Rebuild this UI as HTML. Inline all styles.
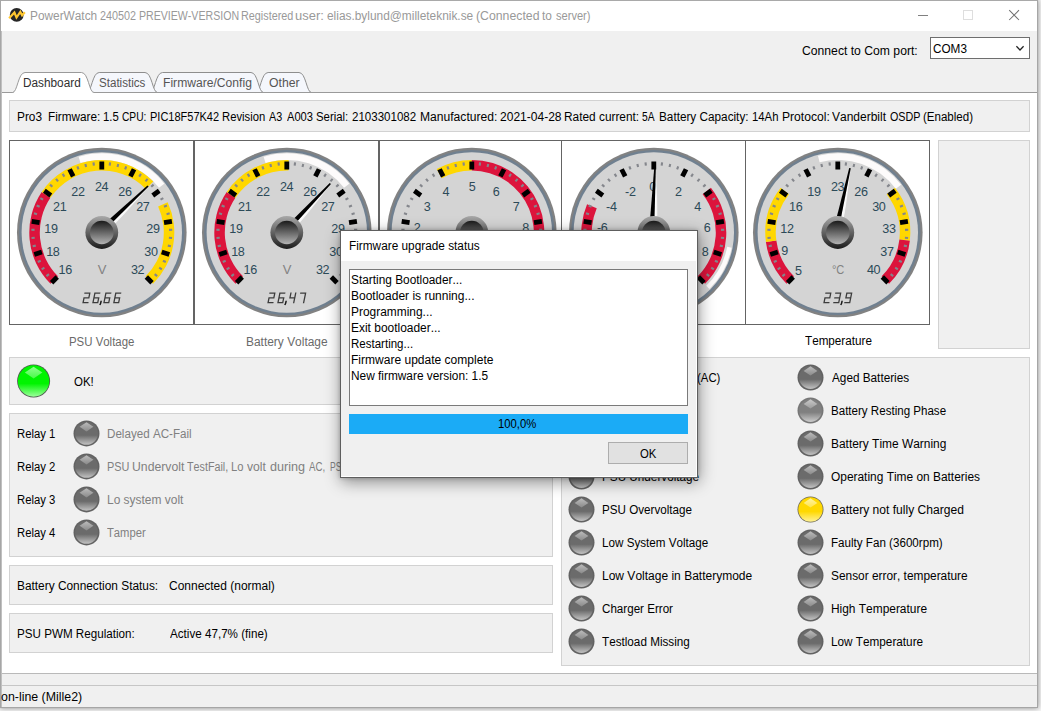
<!DOCTYPE html>
<html lang="en"><head><meta charset="utf-8"><title>PowerWatch</title>
<style>
html,body{margin:0;padding:0}
body{width:1041px;height:711px;overflow:hidden;background:#f4f4f4;position:relative;font-family:"Liberation Sans", sans-serif;font-size:12px}
.abs{position:absolute}
.t{position:absolute;white-space:pre;line-height:16px;height:16px;transform-origin:0 0;font-family:"Liberation Sans", sans-serif;font-kerning:none}
.panel{position:absolute;background:#f0f0f0;border:1px solid #d2d2d2;box-sizing:border-box}
.ln{position:absolute;background:#646464}
#win{position:absolute;left:0;top:0;width:1038px;height:708px;background:#f0f0f0;box-sizing:border-box;box-shadow:0 0 5px rgba(0,0,0,.45);overflow:hidden}
#dlg{position:absolute;left:340px;top:230px;width:358px;height:248px;box-sizing:border-box;border:1px solid #5e5e5e;background:#f0f0f0;box-shadow:1px 4px 15px rgba(0,0,0,.42),0 0 4px rgba(0,0,0,.22)}
</style></head><body>
<div id="win">
<div class="abs" style="left:0;top:0;width:1038px;height:31px;background:#fff"></div>
<div class="abs" style="left:2px;top:92px;width:1035px;height:582px;background:#fff;border-top:1px solid #b4b4b4;border-bottom:1px solid #b9b9b9;box-sizing:border-box"></div>
<div class="abs" style="left:2px;top:685px;width:1035px;height:1px;background:#c6c6c6"></div>
<div class="abs" style="left:0;top:0;width:1038px;height:1px;background:#a9a9a9"></div>
<div class="abs" style="left:0;top:0;width:1px;height:708px;background:#a6a6a6"></div>
<div class="abs" style="left:1px;top:31px;width:1px;height:677px;background:#c0c0c0"></div>
<div class="abs" style="left:1037px;top:0;width:1px;height:708px;background:#a6a6a6"></div>
<div class="abs" style="left:0;top:707px;width:1038px;height:1px;background:#a6a6a6"></div>
<svg class="abs" style="left:0;top:0" width="1041" height="100" viewBox="0 0 1041 100">
<circle cx="16.7" cy="14.9" r="6.9" fill="#262626"/>
<path d="M9.1 18.2L14.4 12.5L16.5 17.5L20.3 11.9L22.1 15.3L24.8 12.3" fill="none" stroke="#ffc730" stroke-width="2.2" stroke-linejoin="miter"/>
<path d="M918 15.5H928" stroke="#808080" stroke-width="1"/>
<rect x="963.5" y="10.5" width="9" height="9" fill="none" stroke="#dedede" stroke-width="1"/>
<path d="M1009.2 10.2L1019 20M1019 10.2L1009.2 20" stroke="#707070" stroke-width="1.05"/>
<!-- tabs -->
<path d="M255.60000000000002 92.5C260.6 92.5 261.1 72.5 268.1 72.5H299.0C306.0 72.5 306.5 92.5 311.5 92.5" fill="#f5f7fc" stroke="#8e8e8e" stroke-width="1"/>
<path d="M150 92.5C155 92.5 155.5 72.5 162.5 72.5H251.0C258.0 72.5 258.5 92.5 263.5 92.5" fill="#f5f7fc" stroke="#8e8e8e" stroke-width="1"/>
<path d="M86.7 92.5C91.7 92.5 92.2 72.5 99.2 72.5H145.0C152.0 72.5 152.5 92.5 157.5 92.5" fill="#f5f7fc" stroke="#8e8e8e" stroke-width="1"/>
<path d="M12.5 93C17.5 93 18.0 73 25.0 73H81.5C88.5 73 89 93 94 93V94H12.5Z" fill="#fff"/>
<path d="M2 92.5H12.5C17.5 92.5 18.0 72.5 25.0 72.5H81.5C88.5 72.5 89 92.5 94 92.5H1037" fill="none" stroke="#9a9a9a" stroke-width="1"/>
</svg>
<div class="abs" style="left:930px;top:37px;width:100px;height:22px;box-sizing:border-box;border:1px solid #6e6e6e;background:#fff"></div>
<svg class="abs" style="left:1012px;top:42px" width="14" height="12" viewBox="0 0 14 12"><path d="M4.4 4.3L8 8L11.6 4.3" fill="none" stroke="#222" stroke-width="1.25"/></svg>
<div class="panel" style="left:9px;top:100px;width:1021px;height:32px"></div>
<div class="abs" style="left:9px;top:140px;width:921px;height:185px;background:#fff"></div>
<div class="ln" style="left:9px;top:140px;width:921px;height:1px"></div>
<div class="ln" style="left:9px;top:324px;width:921px;height:1px"></div>
<div class="ln" style="left:9px;top:140px;width:1px;height:185px"></div>
<div class="ln" style="left:193px;top:140px;width:1px;height:185px"></div>
<div class="ln" style="left:194px;top:140px;width:1px;height:185px"></div>
<div class="ln" style="left:378px;top:140px;width:1px;height:185px"></div>
<div class="ln" style="left:379px;top:140px;width:1px;height:185px"></div>
<div class="ln" style="left:561px;top:140px;width:1px;height:185px"></div>
<div class="ln" style="left:745px;top:140px;width:1px;height:185px"></div>
<div class="ln" style="left:929px;top:140px;width:1px;height:185px"></div>
<div class="panel" style="left:938px;top:140px;width:92px;height:209px"></div>
<div class="panel" style="left:9px;top:357px;width:544px;height:48px"></div>
<div class="panel" style="left:9px;top:413px;width:544px;height:144px"></div>
<div class="panel" style="left:9px;top:565px;width:544px;height:40px"></div>
<div class="panel" style="left:9px;top:613px;width:544px;height:40px"></div>
<div class="panel" style="left:561px;top:357px;width:469px;height:309px"></div>
<svg class="abs" style="left:0;top:0" width="1041" height="711" viewBox="0 0 1041 711" font-family='"Liberation Sans", sans-serif'>
<defs>
<linearGradient id="kb1" x1="0" y1="0" x2="0" y2="1"><stop offset="0" stop-color="#a8a8a8"/><stop offset="1" stop-color="#1c1c1c"/></linearGradient>
<linearGradient id="kb2" x1="0" y1="0" x2="0" y2="1"><stop offset="0" stop-color="#1a1a1a"/><stop offset="1" stop-color="#b4b4b4"/></linearGradient>
<linearGradient id="ndl" x1="0" y1="0" x2="1" y2="0"><stop offset="0" stop-color="#ffffff"/><stop offset="0.55" stop-color="#f4f4f4"/><stop offset="1" stop-color="#a8a8a8"/></linearGradient>
</defs>
<g>
<circle cx="101.8" cy="232.5" r="84.8" fill="#828282"/>
<circle cx="101.8" cy="232.5" r="82.6" fill="#708090"/>
<circle cx="101.8" cy="232.5" r="80.2" fill="#d4d4d4"/>
<path d="M78.61 156.67A79.3 79.3 0 0 1 164.29 183.68L159.01 187.80A72.6 72.6 0 0 0 80.57 163.07Z" fill="#fdfbfb"/>
<path d="M50.53 283.77A72.5 72.5 0 0 1 41.69 191.96L50.40 197.83A62 62 0 0 0 57.96 276.34Z" fill="#dc143c"/>
<path d="M41.69 191.96A72.5 72.5 0 0 1 153.33 181.50L145.87 188.89A62 62 0 0 0 50.40 197.83Z" fill="#ffd700"/>
<path d="M167.67 202.20A72.5 72.5 0 0 1 153.07 283.77L145.64 276.34A62 62 0 0 0 158.13 206.59Z" fill="#ffd700"/>
<rect x="100.75" y="162.00" width="2.1" height="3.2" fill="#84868c" transform="rotate(-128.25 101.8 232.5)"/>
<rect x="100.75" y="162.00" width="2.1" height="3.2" fill="#84868c" transform="rotate(-121.50 101.8 232.5)"/>
<rect x="100.75" y="162.00" width="2.1" height="3.2" fill="#84868c" transform="rotate(-114.75 101.8 232.5)"/>
<rect x="100.75" y="162.00" width="2.1" height="3.2" fill="#84868c" transform="rotate(-101.25 101.8 232.5)"/>
<rect x="100.75" y="162.00" width="2.1" height="3.2" fill="#84868c" transform="rotate(-94.50 101.8 232.5)"/>
<rect x="100.75" y="162.00" width="2.1" height="3.2" fill="#84868c" transform="rotate(-87.75 101.8 232.5)"/>
<rect x="100.75" y="162.00" width="2.1" height="3.2" fill="#84868c" transform="rotate(-74.25 101.8 232.5)"/>
<rect x="100.75" y="162.00" width="2.1" height="3.2" fill="#84868c" transform="rotate(-67.50 101.8 232.5)"/>
<rect x="100.75" y="162.00" width="2.1" height="3.2" fill="#84868c" transform="rotate(-60.75 101.8 232.5)"/>
<rect x="100.75" y="162.00" width="2.1" height="3.2" fill="#84868c" transform="rotate(-47.25 101.8 232.5)"/>
<rect x="100.75" y="162.00" width="2.1" height="3.2" fill="#84868c" transform="rotate(-40.50 101.8 232.5)"/>
<rect x="100.75" y="162.00" width="2.1" height="3.2" fill="#84868c" transform="rotate(-33.75 101.8 232.5)"/>
<rect x="100.75" y="162.00" width="2.1" height="3.2" fill="#84868c" transform="rotate(-20.25 101.8 232.5)"/>
<rect x="100.75" y="162.00" width="2.1" height="3.2" fill="#84868c" transform="rotate(-13.50 101.8 232.5)"/>
<rect x="100.75" y="162.00" width="2.1" height="3.2" fill="#84868c" transform="rotate(-6.75 101.8 232.5)"/>
<rect x="100.75" y="162.00" width="2.1" height="3.2" fill="#84868c" transform="rotate(6.75 101.8 232.5)"/>
<rect x="100.75" y="162.00" width="2.1" height="3.2" fill="#84868c" transform="rotate(13.50 101.8 232.5)"/>
<rect x="100.75" y="162.00" width="2.1" height="3.2" fill="#84868c" transform="rotate(20.25 101.8 232.5)"/>
<rect x="100.75" y="162.00" width="2.1" height="3.2" fill="#84868c" transform="rotate(33.75 101.8 232.5)"/>
<rect x="100.75" y="162.00" width="2.1" height="3.2" fill="#84868c" transform="rotate(40.50 101.8 232.5)"/>
<rect x="100.75" y="162.00" width="2.1" height="3.2" fill="#84868c" transform="rotate(47.25 101.8 232.5)"/>
<rect x="100.75" y="162.00" width="2.1" height="3.2" fill="#84868c" transform="rotate(60.75 101.8 232.5)"/>
<rect x="100.75" y="162.00" width="2.1" height="3.2" fill="#84868c" transform="rotate(67.50 101.8 232.5)"/>
<rect x="100.75" y="162.00" width="2.1" height="3.2" fill="#84868c" transform="rotate(74.25 101.8 232.5)"/>
<rect x="100.75" y="162.00" width="2.1" height="3.2" fill="#84868c" transform="rotate(87.75 101.8 232.5)"/>
<rect x="100.75" y="162.00" width="2.1" height="3.2" fill="#84868c" transform="rotate(94.50 101.8 232.5)"/>
<rect x="100.75" y="162.00" width="2.1" height="3.2" fill="#84868c" transform="rotate(101.25 101.8 232.5)"/>
<rect x="100.75" y="162.00" width="2.1" height="3.2" fill="#84868c" transform="rotate(114.75 101.8 232.5)"/>
<rect x="100.75" y="162.00" width="2.1" height="3.2" fill="#84868c" transform="rotate(121.50 101.8 232.5)"/>
<rect x="100.75" y="162.00" width="2.1" height="3.2" fill="#84868c" transform="rotate(128.25 101.8 232.5)"/>
<rect x="99.40" y="161.50" width="4.8" height="8" fill="#000" transform="rotate(-135.00 101.8 232.5)"/>
<rect x="99.40" y="161.50" width="4.8" height="8" fill="#000" transform="rotate(-108.00 101.8 232.5)"/>
<rect x="99.40" y="161.50" width="4.8" height="8" fill="#000" transform="rotate(-81.00 101.8 232.5)"/>
<rect x="99.40" y="161.50" width="4.8" height="8" fill="#000" transform="rotate(-54.00 101.8 232.5)"/>
<rect x="99.40" y="161.50" width="4.8" height="8" fill="#000" transform="rotate(-27.00 101.8 232.5)"/>
<rect x="99.40" y="161.50" width="4.8" height="8" fill="#000" transform="rotate(0.00 101.8 232.5)"/>
<rect x="99.40" y="161.50" width="4.8" height="8" fill="#000" transform="rotate(27.00 101.8 232.5)"/>
<rect x="99.40" y="161.50" width="4.8" height="8" fill="#000" transform="rotate(54.00 101.8 232.5)"/>
<rect x="99.40" y="161.50" width="4.8" height="8" fill="#000" transform="rotate(81.00 101.8 232.5)"/>
<rect x="99.40" y="161.50" width="4.8" height="8" fill="#000" transform="rotate(108.00 101.8 232.5)"/>
<rect x="99.40" y="161.50" width="4.8" height="8" fill="#000" transform="rotate(135.00 101.8 232.5)"/>
<text x="65.2" y="274.2" text-anchor="middle" font-size="12.6" letter-spacing="-0.35" fill="#2c4a58" >16</text>
<text x="52.8" y="255.6" text-anchor="middle" font-size="12.6" letter-spacing="-0.35" fill="#2c4a58" >18</text>
<text x="50.9" y="233.1" text-anchor="middle" font-size="12.6" letter-spacing="-0.35" fill="#2c4a58" >19</text>
<text x="59.7" y="210.9" text-anchor="middle" font-size="12.6" letter-spacing="-0.35" fill="#2c4a58" >21</text>
<text x="78.0" y="195.8" text-anchor="middle" font-size="12.6" letter-spacing="-0.35" fill="#2c4a58" >22</text>
<text x="101.6" y="191.1" text-anchor="middle" font-size="12.6" letter-spacing="-0.35" fill="#2c4a58" >24</text>
<text x="124.9" y="195.8" text-anchor="middle" font-size="12.6" letter-spacing="-0.35" fill="#2c4a58" >26</text>
<text x="142.8" y="210.9" text-anchor="middle" font-size="12.6" letter-spacing="-0.35" fill="#2c4a58" >27</text>
<text x="152.9" y="233.1" text-anchor="middle" font-size="12.6" letter-spacing="-0.35" fill="#2c4a58" >29</text>
<text x="151.0" y="256.4" text-anchor="middle" font-size="12.6" letter-spacing="-0.35" fill="#2c4a58" >30</text>
<text x="137.6" y="274.2" text-anchor="middle" font-size="12.6" letter-spacing="-0.35" fill="#2c4a58" >32</text>
<text x="102.1" y="274.1" text-anchor="middle" font-size="13" fill="#828282">V</text>
<g transform="translate(83.05 302.65) skewX(-11.5)"><path d="M0.00 -9.50L4.80 -9.50M4.80 -9.50L4.80 -4.75M0.00 -4.75L4.80 -4.75M0.00 -4.75L0.00 0.00M0.00 0.00L4.80 0.00" stroke="#3c3c3c" stroke-width="1.3" fill="none" stroke-linecap="square"/><path d="M9.90 -9.50L14.70 -9.50M9.90 -9.50L9.90 -4.75M9.90 -4.75L14.70 -4.75M9.90 -4.75L9.90 0.00M9.90 0.00L14.70 0.00M14.70 -4.75L14.70 0.00" stroke="#3c3c3c" stroke-width="1.3" fill="none" stroke-linecap="square"/><path d="M17.75 -1.9L17.75 0.5L17.25 2.3" stroke="#161616" stroke-width="1.5" fill="none"/><path d="M20.90 -9.50L25.70 -9.50M20.90 -9.50L20.90 -4.75M20.90 -4.75L25.70 -4.75M20.90 -4.75L20.90 0.00M20.90 0.00L25.70 0.00M25.70 -4.75L25.70 0.00" stroke="#3c3c3c" stroke-width="1.3" fill="none" stroke-linecap="square"/><path d="M30.80 -9.50L35.60 -9.50M30.80 -9.50L30.80 -4.75M30.80 -4.75L35.60 -4.75M30.80 -4.75L30.80 0.00M30.80 0.00L35.60 0.00M35.60 -4.75L35.60 0.00" stroke="#3c3c3c" stroke-width="1.3" fill="none" stroke-linecap="square"/></g>
<g transform="rotate(44.90 101.8 232.5)">
<path d="M106.6 232.5L102.39999999999999 167.3L102.0 232.5Z" fill="url(#ndl)"/>
<path d="M97.0 232.5L100.89999999999999 166.9L102.5 166.9L102.1 232.5Z" fill="#000"/>
</g>
<circle cx="101.8" cy="232.5" r="16.4" fill="url(#kb1)"/>
<circle cx="101.8" cy="232.5" r="11.8" fill="url(#kb2)"/>
</g>
<g>
<circle cx="286.8" cy="232.5" r="84.8" fill="#828282"/>
<circle cx="286.8" cy="232.5" r="82.6" fill="#708090"/>
<circle cx="286.8" cy="232.5" r="80.2" fill="#d4d4d4"/>
<path d="M263.61 156.67A79.3 79.3 0 0 1 349.29 183.68L344.01 187.80A72.6 72.6 0 0 0 265.57 163.07Z" fill="#fdfbfb"/>
<path d="M235.53 283.77A72.5 72.5 0 0 1 226.69 191.96L235.40 197.83A62 62 0 0 0 242.96 276.34Z" fill="#dc143c"/>
<path d="M226.69 191.96A72.5 72.5 0 0 1 288.70 160.02L288.42 170.52A62 62 0 0 0 235.40 197.83Z" fill="#ffd700"/>
<rect x="285.75" y="162.00" width="2.1" height="3.2" fill="#84868c" transform="rotate(-128.25 286.8 232.5)"/>
<rect x="285.75" y="162.00" width="2.1" height="3.2" fill="#84868c" transform="rotate(-121.50 286.8 232.5)"/>
<rect x="285.75" y="162.00" width="2.1" height="3.2" fill="#84868c" transform="rotate(-114.75 286.8 232.5)"/>
<rect x="285.75" y="162.00" width="2.1" height="3.2" fill="#84868c" transform="rotate(-101.25 286.8 232.5)"/>
<rect x="285.75" y="162.00" width="2.1" height="3.2" fill="#84868c" transform="rotate(-94.50 286.8 232.5)"/>
<rect x="285.75" y="162.00" width="2.1" height="3.2" fill="#84868c" transform="rotate(-87.75 286.8 232.5)"/>
<rect x="285.75" y="162.00" width="2.1" height="3.2" fill="#84868c" transform="rotate(-74.25 286.8 232.5)"/>
<rect x="285.75" y="162.00" width="2.1" height="3.2" fill="#84868c" transform="rotate(-67.50 286.8 232.5)"/>
<rect x="285.75" y="162.00" width="2.1" height="3.2" fill="#84868c" transform="rotate(-60.75 286.8 232.5)"/>
<rect x="285.75" y="162.00" width="2.1" height="3.2" fill="#84868c" transform="rotate(-47.25 286.8 232.5)"/>
<rect x="285.75" y="162.00" width="2.1" height="3.2" fill="#84868c" transform="rotate(-40.50 286.8 232.5)"/>
<rect x="285.75" y="162.00" width="2.1" height="3.2" fill="#84868c" transform="rotate(-33.75 286.8 232.5)"/>
<rect x="285.75" y="162.00" width="2.1" height="3.2" fill="#84868c" transform="rotate(-20.25 286.8 232.5)"/>
<rect x="285.75" y="162.00" width="2.1" height="3.2" fill="#84868c" transform="rotate(-13.50 286.8 232.5)"/>
<rect x="285.75" y="162.00" width="2.1" height="3.2" fill="#84868c" transform="rotate(-6.75 286.8 232.5)"/>
<rect x="285.75" y="162.00" width="2.1" height="3.2" fill="#84868c" transform="rotate(6.75 286.8 232.5)"/>
<rect x="285.75" y="162.00" width="2.1" height="3.2" fill="#84868c" transform="rotate(13.50 286.8 232.5)"/>
<rect x="285.75" y="162.00" width="2.1" height="3.2" fill="#84868c" transform="rotate(20.25 286.8 232.5)"/>
<rect x="285.75" y="162.00" width="2.1" height="3.2" fill="#84868c" transform="rotate(33.75 286.8 232.5)"/>
<rect x="285.75" y="162.00" width="2.1" height="3.2" fill="#84868c" transform="rotate(40.50 286.8 232.5)"/>
<rect x="285.75" y="162.00" width="2.1" height="3.2" fill="#84868c" transform="rotate(47.25 286.8 232.5)"/>
<rect x="285.75" y="162.00" width="2.1" height="3.2" fill="#84868c" transform="rotate(60.75 286.8 232.5)"/>
<rect x="285.75" y="162.00" width="2.1" height="3.2" fill="#84868c" transform="rotate(67.50 286.8 232.5)"/>
<rect x="285.75" y="162.00" width="2.1" height="3.2" fill="#84868c" transform="rotate(74.25 286.8 232.5)"/>
<rect x="285.75" y="162.00" width="2.1" height="3.2" fill="#84868c" transform="rotate(87.75 286.8 232.5)"/>
<rect x="285.75" y="162.00" width="2.1" height="3.2" fill="#84868c" transform="rotate(94.50 286.8 232.5)"/>
<rect x="285.75" y="162.00" width="2.1" height="3.2" fill="#84868c" transform="rotate(101.25 286.8 232.5)"/>
<rect x="285.75" y="162.00" width="2.1" height="3.2" fill="#84868c" transform="rotate(114.75 286.8 232.5)"/>
<rect x="285.75" y="162.00" width="2.1" height="3.2" fill="#84868c" transform="rotate(121.50 286.8 232.5)"/>
<rect x="285.75" y="162.00" width="2.1" height="3.2" fill="#84868c" transform="rotate(128.25 286.8 232.5)"/>
<rect x="284.40" y="161.50" width="4.8" height="8" fill="#000" transform="rotate(-135.00 286.8 232.5)"/>
<rect x="284.40" y="161.50" width="4.8" height="8" fill="#000" transform="rotate(-108.00 286.8 232.5)"/>
<rect x="284.40" y="161.50" width="4.8" height="8" fill="#000" transform="rotate(-81.00 286.8 232.5)"/>
<rect x="284.40" y="161.50" width="4.8" height="8" fill="#000" transform="rotate(-54.00 286.8 232.5)"/>
<rect x="284.40" y="161.50" width="4.8" height="8" fill="#000" transform="rotate(-27.00 286.8 232.5)"/>
<rect x="284.40" y="161.50" width="4.8" height="8" fill="#000" transform="rotate(0.00 286.8 232.5)"/>
<rect x="284.40" y="161.50" width="4.8" height="8" fill="#000" transform="rotate(27.00 286.8 232.5)"/>
<rect x="284.40" y="161.50" width="4.8" height="8" fill="#000" transform="rotate(54.00 286.8 232.5)"/>
<rect x="284.40" y="161.50" width="4.8" height="8" fill="#000" transform="rotate(81.00 286.8 232.5)"/>
<rect x="284.40" y="161.50" width="4.8" height="8" fill="#000" transform="rotate(108.00 286.8 232.5)"/>
<rect x="284.40" y="161.50" width="4.8" height="8" fill="#000" transform="rotate(135.00 286.8 232.5)"/>
<text x="250.2" y="274.2" text-anchor="middle" font-size="12.6" letter-spacing="-0.35" fill="#2c4a58" >16</text>
<text x="237.8" y="255.6" text-anchor="middle" font-size="12.6" letter-spacing="-0.35" fill="#2c4a58" >18</text>
<text x="235.9" y="233.1" text-anchor="middle" font-size="12.6" letter-spacing="-0.35" fill="#2c4a58" >19</text>
<text x="244.7" y="210.9" text-anchor="middle" font-size="12.6" letter-spacing="-0.35" fill="#2c4a58" >21</text>
<text x="263.0" y="195.8" text-anchor="middle" font-size="12.6" letter-spacing="-0.35" fill="#2c4a58" >22</text>
<text x="286.6" y="191.1" text-anchor="middle" font-size="12.6" letter-spacing="-0.35" fill="#2c4a58" >24</text>
<text x="309.9" y="195.8" text-anchor="middle" font-size="12.6" letter-spacing="-0.35" fill="#2c4a58" >26</text>
<text x="327.8" y="210.9" text-anchor="middle" font-size="12.6" letter-spacing="-0.35" fill="#2c4a58" >27</text>
<text x="337.9" y="233.1" text-anchor="middle" font-size="12.6" letter-spacing="-0.35" fill="#2c4a58" >29</text>
<text x="336.0" y="256.4" text-anchor="middle" font-size="12.6" letter-spacing="-0.35" fill="#2c4a58" >30</text>
<text x="322.6" y="274.2" text-anchor="middle" font-size="12.6" letter-spacing="-0.35" fill="#2c4a58" >32</text>
<text x="287.1" y="274.1" text-anchor="middle" font-size="13" fill="#828282">V</text>
<g transform="translate(268.05 302.65) skewX(-11.5)"><path d="M0.00 -9.50L4.80 -9.50M4.80 -9.50L4.80 -4.75M0.00 -4.75L4.80 -4.75M0.00 -4.75L0.00 0.00M0.00 0.00L4.80 0.00" stroke="#3c3c3c" stroke-width="1.3" fill="none" stroke-linecap="square"/><path d="M9.90 -9.50L14.70 -9.50M9.90 -9.50L9.90 -4.75M9.90 -4.75L14.70 -4.75M9.90 -4.75L9.90 0.00M9.90 0.00L14.70 0.00M14.70 -4.75L14.70 0.00" stroke="#3c3c3c" stroke-width="1.3" fill="none" stroke-linecap="square"/><path d="M17.75 -1.9L17.75 0.5L17.25 2.3" stroke="#161616" stroke-width="1.5" fill="none"/><path d="M20.90 -9.50L20.90 -4.75M20.90 -4.75L25.70 -4.75M25.70 -9.50L25.70 -4.75M25.70 -4.75L25.70 0.00" stroke="#3c3c3c" stroke-width="1.3" fill="none" stroke-linecap="square"/><path d="M30.80 -9.50L35.60 -9.50M35.60 -9.50L35.60 -4.75M35.60 -4.75L35.60 0.00" stroke="#3c3c3c" stroke-width="1.3" fill="none" stroke-linecap="square"/></g>
<g transform="rotate(41.70 286.8 232.5)">
<path d="M291.6 232.5L287.40000000000003 167.3L287.0 232.5Z" fill="url(#ndl)"/>
<path d="M282.0 232.5L285.90000000000003 166.9L287.5 166.9L287.1 232.5Z" fill="#000"/>
</g>
<circle cx="286.8" cy="232.5" r="16.4" fill="url(#kb1)"/>
<circle cx="286.8" cy="232.5" r="11.8" fill="url(#kb2)"/>
</g>
<g>
<circle cx="471.8" cy="232.5" r="84.8" fill="#828282"/>
<circle cx="471.8" cy="232.5" r="82.6" fill="#708090"/>
<circle cx="471.8" cy="232.5" r="80.2" fill="#d4d4d4"/>
<path d="M436.65 169.09A72.5 72.5 0 0 1 471.80 160.00L471.80 170.50A62 62 0 0 0 441.74 178.27Z" fill="#ffd700"/>
<path d="M471.80 160.00A72.5 72.5 0 0 1 523.07 283.77L515.64 276.34A62 62 0 0 0 471.80 170.50Z" fill="#dc143c"/>
<rect x="470.75" y="162.00" width="2.1" height="3.2" fill="#84868c" transform="rotate(-128.25 471.8 232.5)"/>
<rect x="470.75" y="162.00" width="2.1" height="3.2" fill="#84868c" transform="rotate(-121.50 471.8 232.5)"/>
<rect x="470.75" y="162.00" width="2.1" height="3.2" fill="#84868c" transform="rotate(-114.75 471.8 232.5)"/>
<rect x="470.75" y="162.00" width="2.1" height="3.2" fill="#84868c" transform="rotate(-101.25 471.8 232.5)"/>
<rect x="470.75" y="162.00" width="2.1" height="3.2" fill="#84868c" transform="rotate(-94.50 471.8 232.5)"/>
<rect x="470.75" y="162.00" width="2.1" height="3.2" fill="#84868c" transform="rotate(-87.75 471.8 232.5)"/>
<rect x="470.75" y="162.00" width="2.1" height="3.2" fill="#84868c" transform="rotate(-74.25 471.8 232.5)"/>
<rect x="470.75" y="162.00" width="2.1" height="3.2" fill="#84868c" transform="rotate(-67.50 471.8 232.5)"/>
<rect x="470.75" y="162.00" width="2.1" height="3.2" fill="#84868c" transform="rotate(-60.75 471.8 232.5)"/>
<rect x="470.75" y="162.00" width="2.1" height="3.2" fill="#84868c" transform="rotate(-47.25 471.8 232.5)"/>
<rect x="470.75" y="162.00" width="2.1" height="3.2" fill="#84868c" transform="rotate(-40.50 471.8 232.5)"/>
<rect x="470.75" y="162.00" width="2.1" height="3.2" fill="#84868c" transform="rotate(-33.75 471.8 232.5)"/>
<rect x="470.75" y="162.00" width="2.1" height="3.2" fill="#84868c" transform="rotate(-20.25 471.8 232.5)"/>
<rect x="470.75" y="162.00" width="2.1" height="3.2" fill="#84868c" transform="rotate(-13.50 471.8 232.5)"/>
<rect x="470.75" y="162.00" width="2.1" height="3.2" fill="#84868c" transform="rotate(-6.75 471.8 232.5)"/>
<rect x="470.75" y="162.00" width="2.1" height="3.2" fill="#84868c" transform="rotate(6.75 471.8 232.5)"/>
<rect x="470.75" y="162.00" width="2.1" height="3.2" fill="#84868c" transform="rotate(13.50 471.8 232.5)"/>
<rect x="470.75" y="162.00" width="2.1" height="3.2" fill="#84868c" transform="rotate(20.25 471.8 232.5)"/>
<rect x="470.75" y="162.00" width="2.1" height="3.2" fill="#84868c" transform="rotate(33.75 471.8 232.5)"/>
<rect x="470.75" y="162.00" width="2.1" height="3.2" fill="#84868c" transform="rotate(40.50 471.8 232.5)"/>
<rect x="470.75" y="162.00" width="2.1" height="3.2" fill="#84868c" transform="rotate(47.25 471.8 232.5)"/>
<rect x="470.75" y="162.00" width="2.1" height="3.2" fill="#84868c" transform="rotate(60.75 471.8 232.5)"/>
<rect x="470.75" y="162.00" width="2.1" height="3.2" fill="#84868c" transform="rotate(67.50 471.8 232.5)"/>
<rect x="470.75" y="162.00" width="2.1" height="3.2" fill="#84868c" transform="rotate(74.25 471.8 232.5)"/>
<rect x="470.75" y="162.00" width="2.1" height="3.2" fill="#84868c" transform="rotate(87.75 471.8 232.5)"/>
<rect x="470.75" y="162.00" width="2.1" height="3.2" fill="#84868c" transform="rotate(94.50 471.8 232.5)"/>
<rect x="470.75" y="162.00" width="2.1" height="3.2" fill="#84868c" transform="rotate(101.25 471.8 232.5)"/>
<rect x="470.75" y="162.00" width="2.1" height="3.2" fill="#84868c" transform="rotate(114.75 471.8 232.5)"/>
<rect x="470.75" y="162.00" width="2.1" height="3.2" fill="#84868c" transform="rotate(121.50 471.8 232.5)"/>
<rect x="470.75" y="162.00" width="2.1" height="3.2" fill="#84868c" transform="rotate(128.25 471.8 232.5)"/>
<rect x="469.40" y="161.50" width="4.8" height="8" fill="#000" transform="rotate(-135.00 471.8 232.5)"/>
<rect x="469.40" y="161.50" width="4.8" height="8" fill="#000" transform="rotate(-108.00 471.8 232.5)"/>
<rect x="469.40" y="161.50" width="4.8" height="8" fill="#000" transform="rotate(-81.00 471.8 232.5)"/>
<rect x="469.40" y="161.50" width="4.8" height="8" fill="#000" transform="rotate(-54.00 471.8 232.5)"/>
<rect x="469.40" y="161.50" width="4.8" height="8" fill="#000" transform="rotate(-27.00 471.8 232.5)"/>
<rect x="469.40" y="161.50" width="4.8" height="8" fill="#000" transform="rotate(0.00 471.8 232.5)"/>
<rect x="469.40" y="161.50" width="4.8" height="8" fill="#000" transform="rotate(27.00 471.8 232.5)"/>
<rect x="469.40" y="161.50" width="4.8" height="8" fill="#000" transform="rotate(54.00 471.8 232.5)"/>
<rect x="469.40" y="161.50" width="4.8" height="8" fill="#000" transform="rotate(81.00 471.8 232.5)"/>
<rect x="469.40" y="161.50" width="4.8" height="8" fill="#000" transform="rotate(108.00 471.8 232.5)"/>
<rect x="469.40" y="161.50" width="4.8" height="8" fill="#000" transform="rotate(135.00 471.8 232.5)"/>
<text x="435.2" y="274.2" text-anchor="middle" font-size="12.6" letter-spacing="-0.35" fill="#2c4a58" >0</text>
<text x="422.8" y="255.6" text-anchor="middle" font-size="12.6" letter-spacing="-0.35" fill="#2c4a58" >1</text>
<text x="417.2" y="231.5" text-anchor="middle" font-size="12.6" letter-spacing="-0.35" fill="#2c4a58" >2</text>
<text x="427.1" y="210.5" text-anchor="middle" font-size="12.6" letter-spacing="-0.35" fill="#2c4a58" >3</text>
<text x="445.8" y="195.6" text-anchor="middle" font-size="12.6" letter-spacing="-0.35" fill="#2c4a58" >4</text>
<text x="472.0" y="190.9" text-anchor="middle" font-size="12.6" letter-spacing="-0.35" fill="#2c4a58" >5</text>
<text x="496.1" y="195.6" text-anchor="middle" font-size="12.6" letter-spacing="-0.35" fill="#2c4a58" >6</text>
<text x="516.1" y="210.5" text-anchor="middle" font-size="12.6" letter-spacing="-0.35" fill="#2c4a58" >7</text>
<text x="525.5" y="231.5" text-anchor="middle" font-size="12.6" letter-spacing="-0.35" fill="#2c4a58" >8</text>
<text x="521.0" y="256.4" text-anchor="middle" font-size="12.6" letter-spacing="-0.35" fill="#2c4a58" >9</text>
<text x="507.6" y="274.2" text-anchor="middle" font-size="12.6" letter-spacing="-0.35" fill="#2c4a58" >10</text>
<text x="472.1" y="274.1" text-anchor="middle" font-size="13" fill="#828282">A</text>
<g transform="translate(458.00 302.65) skewX(-11.5)"><path d="M0.00 -9.50L4.80 -9.50M4.80 -9.50L4.80 -4.75M4.80 -4.75L4.80 0.00M0.00 0.00L4.80 0.00M0.00 -4.75L0.00 0.00M0.00 -9.50L0.00 -4.75" stroke="#3c3c3c" stroke-width="1.3" fill="none" stroke-linecap="square"/><path d="M7.85 -1.9L7.85 0.5L7.35 2.3" stroke="#161616" stroke-width="1.5" fill="none"/><path d="M11.00 -9.50L15.80 -9.50M15.80 -9.50L15.80 -4.75M15.80 -4.75L15.80 0.00M11.00 0.00L15.80 0.00M11.00 -4.75L11.00 0.00M11.00 -9.50L11.00 -4.75" stroke="#3c3c3c" stroke-width="1.3" fill="none" stroke-linecap="square"/><path d="M20.90 -9.50L25.70 -9.50M25.70 -9.50L25.70 -4.75M25.70 -4.75L25.70 0.00M20.90 0.00L25.70 0.00M20.90 -4.75L20.90 0.00M20.90 -9.50L20.90 -4.75" stroke="#3c3c3c" stroke-width="1.3" fill="none" stroke-linecap="square"/></g>
<g transform="rotate(-135.00 471.8 232.5)">
<path d="M476.6 232.5L472.40000000000003 167.3L472.0 232.5Z" fill="url(#ndl)"/>
<path d="M467.0 232.5L470.90000000000003 166.9L472.5 166.9L472.1 232.5Z" fill="#000"/>
</g>
<circle cx="471.8" cy="232.5" r="16.4" fill="url(#kb1)"/>
<circle cx="471.8" cy="232.5" r="11.8" fill="url(#kb2)"/>
</g>
<g>
<circle cx="653.8" cy="232.5" r="84.8" fill="#828282"/>
<circle cx="653.8" cy="232.5" r="82.6" fill="#708090"/>
<circle cx="653.8" cy="232.5" r="80.2" fill="#d4d4d4"/>
<path d="M731.64 247.63A79.3 79.3 0 0 1 709.38 289.06L706.23 285.85A74.8 74.8 0 0 0 727.23 246.77Z" fill="#fdfbfb"/>
<path d="M602.53 283.77A72.5 72.5 0 0 1 587.06 204.17L596.73 208.27A62 62 0 0 0 609.96 276.34Z" fill="#dc143c"/>
<path d="M710.93 187.86A72.5 72.5 0 0 1 705.07 283.77L697.64 276.34A62 62 0 0 0 702.66 194.33Z" fill="#dc143c"/>
<rect x="652.75" y="162.00" width="2.1" height="3.2" fill="#84868c" transform="rotate(-128.25 653.8 232.5)"/>
<rect x="652.75" y="162.00" width="2.1" height="3.2" fill="#84868c" transform="rotate(-121.50 653.8 232.5)"/>
<rect x="652.75" y="162.00" width="2.1" height="3.2" fill="#84868c" transform="rotate(-114.75 653.8 232.5)"/>
<rect x="652.75" y="162.00" width="2.1" height="3.2" fill="#84868c" transform="rotate(-101.25 653.8 232.5)"/>
<rect x="652.75" y="162.00" width="2.1" height="3.2" fill="#84868c" transform="rotate(-94.50 653.8 232.5)"/>
<rect x="652.75" y="162.00" width="2.1" height="3.2" fill="#84868c" transform="rotate(-87.75 653.8 232.5)"/>
<rect x="652.75" y="162.00" width="2.1" height="3.2" fill="#84868c" transform="rotate(-74.25 653.8 232.5)"/>
<rect x="652.75" y="162.00" width="2.1" height="3.2" fill="#84868c" transform="rotate(-67.50 653.8 232.5)"/>
<rect x="652.75" y="162.00" width="2.1" height="3.2" fill="#84868c" transform="rotate(-60.75 653.8 232.5)"/>
<rect x="652.75" y="162.00" width="2.1" height="3.2" fill="#84868c" transform="rotate(-47.25 653.8 232.5)"/>
<rect x="652.75" y="162.00" width="2.1" height="3.2" fill="#84868c" transform="rotate(-40.50 653.8 232.5)"/>
<rect x="652.75" y="162.00" width="2.1" height="3.2" fill="#84868c" transform="rotate(-33.75 653.8 232.5)"/>
<rect x="652.75" y="162.00" width="2.1" height="3.2" fill="#84868c" transform="rotate(-20.25 653.8 232.5)"/>
<rect x="652.75" y="162.00" width="2.1" height="3.2" fill="#84868c" transform="rotate(-13.50 653.8 232.5)"/>
<rect x="652.75" y="162.00" width="2.1" height="3.2" fill="#84868c" transform="rotate(-6.75 653.8 232.5)"/>
<rect x="652.75" y="162.00" width="2.1" height="3.2" fill="#84868c" transform="rotate(6.75 653.8 232.5)"/>
<rect x="652.75" y="162.00" width="2.1" height="3.2" fill="#84868c" transform="rotate(13.50 653.8 232.5)"/>
<rect x="652.75" y="162.00" width="2.1" height="3.2" fill="#84868c" transform="rotate(20.25 653.8 232.5)"/>
<rect x="652.75" y="162.00" width="2.1" height="3.2" fill="#84868c" transform="rotate(33.75 653.8 232.5)"/>
<rect x="652.75" y="162.00" width="2.1" height="3.2" fill="#84868c" transform="rotate(40.50 653.8 232.5)"/>
<rect x="652.75" y="162.00" width="2.1" height="3.2" fill="#84868c" transform="rotate(47.25 653.8 232.5)"/>
<rect x="652.75" y="162.00" width="2.1" height="3.2" fill="#84868c" transform="rotate(60.75 653.8 232.5)"/>
<rect x="652.75" y="162.00" width="2.1" height="3.2" fill="#84868c" transform="rotate(67.50 653.8 232.5)"/>
<rect x="652.75" y="162.00" width="2.1" height="3.2" fill="#84868c" transform="rotate(74.25 653.8 232.5)"/>
<rect x="652.75" y="162.00" width="2.1" height="3.2" fill="#84868c" transform="rotate(87.75 653.8 232.5)"/>
<rect x="652.75" y="162.00" width="2.1" height="3.2" fill="#84868c" transform="rotate(94.50 653.8 232.5)"/>
<rect x="652.75" y="162.00" width="2.1" height="3.2" fill="#84868c" transform="rotate(101.25 653.8 232.5)"/>
<rect x="652.75" y="162.00" width="2.1" height="3.2" fill="#84868c" transform="rotate(114.75 653.8 232.5)"/>
<rect x="652.75" y="162.00" width="2.1" height="3.2" fill="#84868c" transform="rotate(121.50 653.8 232.5)"/>
<rect x="652.75" y="162.00" width="2.1" height="3.2" fill="#84868c" transform="rotate(128.25 653.8 232.5)"/>
<rect x="651.40" y="161.50" width="4.8" height="8" fill="#000" transform="rotate(-135.00 653.8 232.5)"/>
<rect x="651.40" y="161.50" width="4.8" height="8" fill="#000" transform="rotate(-108.00 653.8 232.5)"/>
<rect x="651.40" y="161.50" width="4.8" height="8" fill="#000" transform="rotate(-81.00 653.8 232.5)"/>
<rect x="651.40" y="161.50" width="4.8" height="8" fill="#000" transform="rotate(-54.00 653.8 232.5)"/>
<rect x="651.40" y="161.50" width="4.8" height="8" fill="#000" transform="rotate(-27.00 653.8 232.5)"/>
<rect x="651.40" y="161.50" width="4.8" height="8" fill="#000" transform="rotate(0.00 653.8 232.5)"/>
<rect x="651.40" y="161.50" width="4.8" height="8" fill="#000" transform="rotate(27.00 653.8 232.5)"/>
<rect x="651.40" y="161.50" width="4.8" height="8" fill="#000" transform="rotate(54.00 653.8 232.5)"/>
<rect x="651.40" y="161.50" width="4.8" height="8" fill="#000" transform="rotate(81.00 653.8 232.5)"/>
<rect x="651.40" y="161.50" width="4.8" height="8" fill="#000" transform="rotate(108.00 653.8 232.5)"/>
<rect x="651.40" y="161.50" width="4.8" height="8" fill="#000" transform="rotate(135.00 653.8 232.5)"/>
<text x="617.2" y="274.2" text-anchor="middle" font-size="12.6" letter-spacing="-0.35" fill="#2c4a58" >-10</text>
<text x="604.8" y="255.6" text-anchor="middle" font-size="12.6" letter-spacing="-0.35" fill="#2c4a58" >-8</text>
<text x="602.2" y="231.9" text-anchor="middle" font-size="12.6" letter-spacing="-0.35" fill="#2c4a58" >-6</text>
<text x="611.3" y="210.8" text-anchor="middle" font-size="12.6" letter-spacing="-0.35" fill="#2c4a58" >-4</text>
<text x="630.3" y="195.6" text-anchor="middle" font-size="12.6" letter-spacing="-0.35" fill="#2c4a58" >-2</text>
<text x="652.6" y="190.9" text-anchor="middle" font-size="12.6" letter-spacing="-0.35" fill="#2c4a58" >0</text>
<text x="678.4" y="195.6" text-anchor="middle" font-size="12.6" letter-spacing="-0.35" fill="#2c4a58" >2</text>
<text x="697.6" y="210.8" text-anchor="middle" font-size="12.6" letter-spacing="-0.35" fill="#2c4a58" >4</text>
<text x="707.2" y="232.2" text-anchor="middle" font-size="12.6" letter-spacing="-0.35" fill="#2c4a58" >6</text>
<text x="705.1" y="255.7" text-anchor="middle" font-size="12.6" letter-spacing="-0.35" fill="#2c4a58" >8</text>
<text x="689.6" y="274.2" text-anchor="middle" font-size="12.6" letter-spacing="-0.35" fill="#2c4a58" >10</text>
<text x="654.0999999999999" y="274.1" text-anchor="middle" font-size="13" fill="#828282">A</text>
<g transform="translate(640.00 302.65) skewX(-11.5)"><path d="M0.00 -9.50L4.80 -9.50M4.80 -9.50L4.80 -4.75M4.80 -4.75L4.80 0.00M0.00 0.00L4.80 0.00M0.00 -4.75L0.00 0.00M0.00 -9.50L0.00 -4.75" stroke="#3c3c3c" stroke-width="1.3" fill="none" stroke-linecap="square"/><path d="M7.85 -1.9L7.85 0.5L7.35 2.3" stroke="#161616" stroke-width="1.5" fill="none"/><path d="M11.00 -9.50L15.80 -9.50M15.80 -9.50L15.80 -4.75M15.80 -4.75L15.80 0.00M11.00 0.00L15.80 0.00M11.00 -4.75L11.00 0.00M11.00 -9.50L11.00 -4.75" stroke="#3c3c3c" stroke-width="1.3" fill="none" stroke-linecap="square"/><path d="M20.90 -9.50L25.70 -9.50M25.70 -9.50L25.70 -4.75M20.90 -9.50L20.90 -4.75M20.90 -4.75L25.70 -4.75M25.70 -4.75L25.70 0.00M20.90 0.00L25.70 0.00" stroke="#3c3c3c" stroke-width="1.3" fill="none" stroke-linecap="square"/></g>
<g transform="rotate(1.20 653.8 232.5)">
<path d="M658.5999999999999 232.5L654.4 167.3L654.0 232.5Z" fill="url(#ndl)"/>
<path d="M649.0 232.5L652.9 166.9L654.5 166.9L654.0999999999999 232.5Z" fill="#000"/>
</g>
<circle cx="653.8" cy="232.5" r="16.4" fill="url(#kb1)"/>
<circle cx="653.8" cy="232.5" r="11.8" fill="url(#kb2)"/>
</g>
<g>
<circle cx="837.8" cy="232.5" r="84.8" fill="#828282"/>
<circle cx="837.8" cy="232.5" r="82.6" fill="#708090"/>
<circle cx="837.8" cy="232.5" r="80.2" fill="#d4d4d4"/>
<path d="M817.94 155.73A79.3 79.3 0 0 1 901.13 184.78L895.78 188.81A72.6 72.6 0 0 0 819.62 162.21Z" fill="#fdfbfb"/>
<path d="M786.53 283.77A72.5 72.5 0 0 1 765.92 241.96L776.33 240.59A62 62 0 0 0 793.96 276.34Z" fill="#dc143c"/>
<path d="M765.92 241.96A72.5 72.5 0 0 1 780.67 187.86L788.94 194.33A62 62 0 0 0 776.33 240.59Z" fill="#ffd700"/>
<path d="M894.93 187.86A72.5 72.5 0 0 1 909.83 240.71L899.40 239.52A62 62 0 0 0 886.66 194.33Z" fill="#ffd700"/>
<path d="M909.83 240.71A72.5 72.5 0 0 1 889.07 283.77L881.64 276.34A62 62 0 0 0 899.40 239.52Z" fill="#dc143c"/>
<rect x="836.75" y="162.00" width="2.1" height="3.2" fill="#84868c" transform="rotate(-128.25 837.8 232.5)"/>
<rect x="836.75" y="162.00" width="2.1" height="3.2" fill="#84868c" transform="rotate(-121.50 837.8 232.5)"/>
<rect x="836.75" y="162.00" width="2.1" height="3.2" fill="#84868c" transform="rotate(-114.75 837.8 232.5)"/>
<rect x="836.75" y="162.00" width="2.1" height="3.2" fill="#84868c" transform="rotate(-101.25 837.8 232.5)"/>
<rect x="836.75" y="162.00" width="2.1" height="3.2" fill="#84868c" transform="rotate(-94.50 837.8 232.5)"/>
<rect x="836.75" y="162.00" width="2.1" height="3.2" fill="#84868c" transform="rotate(-87.75 837.8 232.5)"/>
<rect x="836.75" y="162.00" width="2.1" height="3.2" fill="#84868c" transform="rotate(-74.25 837.8 232.5)"/>
<rect x="836.75" y="162.00" width="2.1" height="3.2" fill="#84868c" transform="rotate(-67.50 837.8 232.5)"/>
<rect x="836.75" y="162.00" width="2.1" height="3.2" fill="#84868c" transform="rotate(-60.75 837.8 232.5)"/>
<rect x="836.75" y="162.00" width="2.1" height="3.2" fill="#84868c" transform="rotate(-47.25 837.8 232.5)"/>
<rect x="836.75" y="162.00" width="2.1" height="3.2" fill="#84868c" transform="rotate(-40.50 837.8 232.5)"/>
<rect x="836.75" y="162.00" width="2.1" height="3.2" fill="#84868c" transform="rotate(-33.75 837.8 232.5)"/>
<rect x="836.75" y="162.00" width="2.1" height="3.2" fill="#84868c" transform="rotate(-20.25 837.8 232.5)"/>
<rect x="836.75" y="162.00" width="2.1" height="3.2" fill="#84868c" transform="rotate(-13.50 837.8 232.5)"/>
<rect x="836.75" y="162.00" width="2.1" height="3.2" fill="#84868c" transform="rotate(-6.75 837.8 232.5)"/>
<rect x="836.75" y="162.00" width="2.1" height="3.2" fill="#84868c" transform="rotate(6.75 837.8 232.5)"/>
<rect x="836.75" y="162.00" width="2.1" height="3.2" fill="#84868c" transform="rotate(13.50 837.8 232.5)"/>
<rect x="836.75" y="162.00" width="2.1" height="3.2" fill="#84868c" transform="rotate(20.25 837.8 232.5)"/>
<rect x="836.75" y="162.00" width="2.1" height="3.2" fill="#84868c" transform="rotate(33.75 837.8 232.5)"/>
<rect x="836.75" y="162.00" width="2.1" height="3.2" fill="#84868c" transform="rotate(40.50 837.8 232.5)"/>
<rect x="836.75" y="162.00" width="2.1" height="3.2" fill="#84868c" transform="rotate(47.25 837.8 232.5)"/>
<rect x="836.75" y="162.00" width="2.1" height="3.2" fill="#84868c" transform="rotate(60.75 837.8 232.5)"/>
<rect x="836.75" y="162.00" width="2.1" height="3.2" fill="#84868c" transform="rotate(67.50 837.8 232.5)"/>
<rect x="836.75" y="162.00" width="2.1" height="3.2" fill="#84868c" transform="rotate(74.25 837.8 232.5)"/>
<rect x="836.75" y="162.00" width="2.1" height="3.2" fill="#84868c" transform="rotate(87.75 837.8 232.5)"/>
<rect x="836.75" y="162.00" width="2.1" height="3.2" fill="#84868c" transform="rotate(94.50 837.8 232.5)"/>
<rect x="836.75" y="162.00" width="2.1" height="3.2" fill="#84868c" transform="rotate(101.25 837.8 232.5)"/>
<rect x="836.75" y="162.00" width="2.1" height="3.2" fill="#84868c" transform="rotate(114.75 837.8 232.5)"/>
<rect x="836.75" y="162.00" width="2.1" height="3.2" fill="#84868c" transform="rotate(121.50 837.8 232.5)"/>
<rect x="836.75" y="162.00" width="2.1" height="3.2" fill="#84868c" transform="rotate(128.25 837.8 232.5)"/>
<rect x="835.40" y="161.50" width="4.8" height="8" fill="#000" transform="rotate(-135.00 837.8 232.5)"/>
<rect x="835.40" y="161.50" width="4.8" height="8" fill="#000" transform="rotate(-108.00 837.8 232.5)"/>
<rect x="835.40" y="161.50" width="4.8" height="8" fill="#000" transform="rotate(-81.00 837.8 232.5)"/>
<rect x="835.40" y="161.50" width="4.8" height="8" fill="#000" transform="rotate(-54.00 837.8 232.5)"/>
<rect x="835.40" y="161.50" width="4.8" height="8" fill="#000" transform="rotate(-27.00 837.8 232.5)"/>
<rect x="835.40" y="161.50" width="4.8" height="8" fill="#000" transform="rotate(0.00 837.8 232.5)"/>
<rect x="835.40" y="161.50" width="4.8" height="8" fill="#000" transform="rotate(27.00 837.8 232.5)"/>
<rect x="835.40" y="161.50" width="4.8" height="8" fill="#000" transform="rotate(54.00 837.8 232.5)"/>
<rect x="835.40" y="161.50" width="4.8" height="8" fill="#000" transform="rotate(81.00 837.8 232.5)"/>
<rect x="835.40" y="161.50" width="4.8" height="8" fill="#000" transform="rotate(108.00 837.8 232.5)"/>
<rect x="835.40" y="161.50" width="4.8" height="8" fill="#000" transform="rotate(135.00 837.8 232.5)"/>
<text x="798.4" y="274.5" text-anchor="middle" font-size="12.6" letter-spacing="-0.35" fill="#2c4a58" >5</text>
<text x="784.5" y="255.4" text-anchor="middle" font-size="12.6" letter-spacing="-0.35" fill="#2c4a58" >9</text>
<text x="786.9" y="233.1" text-anchor="middle" font-size="12.6" letter-spacing="-0.35" fill="#2c4a58" >12</text>
<text x="795.7" y="210.9" text-anchor="middle" font-size="12.6" letter-spacing="-0.35" fill="#2c4a58" >16</text>
<text x="814.0" y="195.8" text-anchor="middle" font-size="12.6" letter-spacing="-0.35" fill="#2c4a58" >19</text>
<text x="837.6" y="191.1" text-anchor="middle" font-size="12.6" letter-spacing="-0.35" fill="#2c4a58" >23</text>
<text x="860.9" y="195.8" text-anchor="middle" font-size="12.6" letter-spacing="-0.35" fill="#2c4a58" >26</text>
<text x="878.8" y="210.9" text-anchor="middle" font-size="12.6" letter-spacing="-0.35" fill="#2c4a58" >30</text>
<text x="888.9" y="233.1" text-anchor="middle" font-size="12.6" letter-spacing="-0.35" fill="#2c4a58" >33</text>
<text x="887.0" y="256.4" text-anchor="middle" font-size="12.6" letter-spacing="-0.35" fill="#2c4a58" >37</text>
<text x="873.6" y="274.2" text-anchor="middle" font-size="12.6" letter-spacing="-0.35" fill="#2c4a58" >40</text>
<text x="838.0999999999999" y="274.1" text-anchor="middle" font-size="13" fill="#828282" textLength="12.4" lengthAdjust="spacingAndGlyphs">°C</text>
<g transform="translate(824.00 302.65) skewX(-11.5)"><path d="M0.00 -9.50L4.80 -9.50M4.80 -9.50L4.80 -4.75M0.00 -4.75L4.80 -4.75M0.00 -4.75L0.00 0.00M0.00 0.00L4.80 0.00" stroke="#3c3c3c" stroke-width="1.3" fill="none" stroke-linecap="square"/><path d="M9.90 -9.50L14.70 -9.50M14.70 -9.50L14.70 -4.75M9.90 -4.75L14.70 -4.75M14.70 -4.75L14.70 0.00M9.90 0.00L14.70 0.00" stroke="#3c3c3c" stroke-width="1.3" fill="none" stroke-linecap="square"/><path d="M17.75 -1.9L17.75 0.5L17.25 2.3" stroke="#161616" stroke-width="1.5" fill="none"/><path d="M20.90 -9.50L25.70 -9.50M25.70 -9.50L25.70 -4.75M20.90 -9.50L20.90 -4.75M20.90 -4.75L25.70 -4.75M25.70 -4.75L25.70 0.00M20.90 0.00L25.70 0.00" stroke="#3c3c3c" stroke-width="1.3" fill="none" stroke-linecap="square"/></g>
<g transform="rotate(10.80 837.8 232.5)">
<path d="M842.5999999999999 232.5L838.4 167.3L838.0 232.5Z" fill="url(#ndl)"/>
<path d="M833.0 232.5L836.9 166.9L838.5 166.9L838.0999999999999 232.5Z" fill="#000"/>
</g>
<circle cx="837.8" cy="232.5" r="16.4" fill="url(#kb1)"/>
<circle cx="837.8" cy="232.5" r="11.8" fill="url(#kb2)"/>
</g>
</svg>
<svg class="abs" style="left:0;top:0" width="1041" height="711" viewBox="0 0 1041 711">
<defs><linearGradient id="lggrayb" x1="0" y1="0" x2="0" y2="1"><stop offset="0" stop-color="#6b6b6b"/><stop offset="0.58" stop-color="#6b6b6b"/><stop offset="0.97" stop-color="#bcbcbc"/><stop offset="1" stop-color="#bcbcbc"/></linearGradient><linearGradient id="lggrayd" x1="0" y1="0" x2="0" y2="1"><stop offset="0" stop-color="#bcbcbc"/><stop offset="1" stop-color="#8a8a8a"/></linearGradient><linearGradient id="lglgrayb" x1="0" y1="0" x2="0" y2="1"><stop offset="0" stop-color="#808080"/><stop offset="0.58" stop-color="#808080"/><stop offset="0.97" stop-color="#c6c6c6"/><stop offset="1" stop-color="#c6c6c6"/></linearGradient><linearGradient id="lglgrayd" x1="0" y1="0" x2="0" y2="1"><stop offset="0" stop-color="#cacaca"/><stop offset="1" stop-color="#9c9c9c"/></linearGradient><linearGradient id="lgyellowb" x1="0" y1="0" x2="0" y2="1"><stop offset="0" stop-color="#ffd800"/><stop offset="0.58" stop-color="#ffd800"/><stop offset="0.97" stop-color="#fff08a"/><stop offset="1" stop-color="#fff08a"/></linearGradient><linearGradient id="lgyellowd" x1="0" y1="0" x2="0" y2="1"><stop offset="0" stop-color="#fff3a0"/><stop offset="1" stop-color="#ffe44a"/></linearGradient><linearGradient id="lggreenb" x1="0" y1="0" x2="0" y2="1"><stop offset="0" stop-color="#00f400"/><stop offset="0.58" stop-color="#00f400"/><stop offset="0.97" stop-color="#90ff90"/><stop offset="1" stop-color="#90ff90"/></linearGradient><linearGradient id="lggreend" x1="0" y1="0" x2="0" y2="1"><stop offset="0" stop-color="#8cff8c"/><stop offset="1" stop-color="#48fa48"/></linearGradient></defs>
<circle cx="33.6" cy="381" r="16.5" fill="#4f5a4f"/><circle cx="33.6" cy="381" r="15.70" fill="url(#lggreenb)"/><path d="M24.84 372.62L33.60 366.78L42.36 372.62L33.60 378.59Z" fill="url(#lggreend)"/>
<circle cx="86.5" cy="433.4" r="13" fill="#626262"/><circle cx="86.5" cy="433.4" r="11.40" fill="url(#lggrayb)"/><path d="M79.60 426.80L86.50 422.20L93.40 426.80L86.50 431.50Z" fill="url(#lggrayd)"/>
<circle cx="86.5" cy="466.4" r="13" fill="#626262"/><circle cx="86.5" cy="466.4" r="11.40" fill="url(#lggrayb)"/><path d="M79.60 459.80L86.50 455.20L93.40 459.80L86.50 464.50Z" fill="url(#lggrayd)"/>
<circle cx="86.5" cy="499.4" r="13" fill="#626262"/><circle cx="86.5" cy="499.4" r="11.40" fill="url(#lggrayb)"/><path d="M79.60 492.80L86.50 488.20L93.40 492.80L86.50 497.50Z" fill="url(#lggrayd)"/>
<circle cx="86.5" cy="532.4" r="13" fill="#626262"/><circle cx="86.5" cy="532.4" r="11.40" fill="url(#lggrayb)"/><path d="M79.60 525.80L86.50 521.20L93.40 525.80L86.50 530.50Z" fill="url(#lggrayd)"/>
<circle cx="581.5" cy="377.5" r="13" fill="#626262"/><circle cx="581.5" cy="377.5" r="11.40" fill="url(#lggrayb)"/><path d="M574.60 370.90L581.50 366.30L588.40 370.90L581.50 375.60Z" fill="url(#lggrayd)"/>
<circle cx="810.5" cy="377.5" r="13" fill="#626262"/><circle cx="810.5" cy="377.5" r="11.40" fill="url(#lggrayb)"/><path d="M803.60 370.90L810.50 366.30L817.40 370.90L810.50 375.60Z" fill="url(#lggrayd)"/>
<circle cx="581.5" cy="410.5" r="13" fill="#626262"/><circle cx="581.5" cy="410.5" r="11.40" fill="url(#lggrayb)"/><path d="M574.60 403.90L581.50 399.30L588.40 403.90L581.50 408.60Z" fill="url(#lggrayd)"/>
<circle cx="810.5" cy="410.5" r="13" fill="#777777"/><circle cx="810.5" cy="410.5" r="11.40" fill="url(#lglgrayb)"/><path d="M803.60 403.90L810.50 399.30L817.40 403.90L810.50 408.60Z" fill="url(#lglgrayd)"/>
<circle cx="581.5" cy="443.5" r="13" fill="#626262"/><circle cx="581.5" cy="443.5" r="11.40" fill="url(#lggrayb)"/><path d="M574.60 436.90L581.50 432.30L588.40 436.90L581.50 441.60Z" fill="url(#lggrayd)"/>
<circle cx="810.5" cy="443.5" r="13" fill="#626262"/><circle cx="810.5" cy="443.5" r="11.40" fill="url(#lggrayb)"/><path d="M803.60 436.90L810.50 432.30L817.40 436.90L810.50 441.60Z" fill="url(#lggrayd)"/>
<circle cx="581.5" cy="476.5" r="13" fill="#626262"/><circle cx="581.5" cy="476.5" r="11.40" fill="url(#lggrayb)"/><path d="M574.60 469.90L581.50 465.30L588.40 469.90L581.50 474.60Z" fill="url(#lggrayd)"/>
<circle cx="810.5" cy="476.5" r="13" fill="#626262"/><circle cx="810.5" cy="476.5" r="11.40" fill="url(#lggrayb)"/><path d="M803.60 469.90L810.50 465.30L817.40 469.90L810.50 474.60Z" fill="url(#lggrayd)"/>
<circle cx="581.5" cy="509.5" r="13" fill="#626262"/><circle cx="581.5" cy="509.5" r="11.40" fill="url(#lggrayb)"/><path d="M574.60 502.90L581.50 498.30L588.40 502.90L581.50 507.60Z" fill="url(#lggrayd)"/>
<circle cx="810.5" cy="509.5" r="13" fill="#6e6a5a"/><circle cx="810.5" cy="509.5" r="12.20" fill="url(#lgyellowb)"/><path d="M803.60 502.90L810.50 498.30L817.40 502.90L810.50 507.60Z" fill="url(#lgyellowd)"/>
<circle cx="581.5" cy="542.5" r="13" fill="#626262"/><circle cx="581.5" cy="542.5" r="11.40" fill="url(#lggrayb)"/><path d="M574.60 535.90L581.50 531.30L588.40 535.90L581.50 540.60Z" fill="url(#lggrayd)"/>
<circle cx="810.5" cy="542.5" r="13" fill="#626262"/><circle cx="810.5" cy="542.5" r="11.40" fill="url(#lggrayb)"/><path d="M803.60 535.90L810.50 531.30L817.40 535.90L810.50 540.60Z" fill="url(#lggrayd)"/>
<circle cx="581.5" cy="575.5" r="13" fill="#626262"/><circle cx="581.5" cy="575.5" r="11.40" fill="url(#lggrayb)"/><path d="M574.60 568.90L581.50 564.30L588.40 568.90L581.50 573.60Z" fill="url(#lggrayd)"/>
<circle cx="810.5" cy="575.5" r="13" fill="#626262"/><circle cx="810.5" cy="575.5" r="11.40" fill="url(#lggrayb)"/><path d="M803.60 568.90L810.50 564.30L817.40 568.90L810.50 573.60Z" fill="url(#lggrayd)"/>
<circle cx="581.5" cy="608.5" r="13" fill="#626262"/><circle cx="581.5" cy="608.5" r="11.40" fill="url(#lggrayb)"/><path d="M574.60 601.90L581.50 597.30L588.40 601.90L581.50 606.60Z" fill="url(#lggrayd)"/>
<circle cx="810.5" cy="608.5" r="13" fill="#626262"/><circle cx="810.5" cy="608.5" r="11.40" fill="url(#lggrayb)"/><path d="M803.60 601.90L810.50 597.30L817.40 601.90L810.50 606.60Z" fill="url(#lggrayd)"/>
<circle cx="581.5" cy="641.5" r="13" fill="#626262"/><circle cx="581.5" cy="641.5" r="11.40" fill="url(#lggrayb)"/><path d="M574.60 634.90L581.50 630.30L588.40 634.90L581.50 639.60Z" fill="url(#lggrayd)"/>
<circle cx="810.5" cy="641.5" r="13" fill="#626262"/><circle cx="810.5" cy="641.5" r="11.40" fill="url(#lggrayb)"/><path d="M803.60 634.90L810.50 630.30L817.40 634.90L810.50 639.60Z" fill="url(#lggrayd)"/>
</svg>
<span class="t" style="left:30.13px;top:8.00px;color:#999999;font-size:12px;transform:scaleX(0.9871)">PowerWatch</span>
<span class="t" style="left:100.26px;top:8.00px;color:#999999;font-size:12px;transform:scaleX(0.8987)">240502</span>
<span class="t" style="left:138.83px;top:8.00px;color:#999999;font-size:12px;transform:scaleX(0.8825)">PREVIEW-VERSION</span>
<span class="t" style="left:241.11px;top:8.00px;color:#999999;font-size:12px;transform:scaleX(0.9010)">Registered</span>
<span class="t" style="left:295.36px;top:8.00px;color:#999999;font-size:12px;transform:scaleX(1.0805)">user:</span>
<span class="t" style="left:327.19px;top:8.00px;color:#999999;font-size:12px;transform:scaleX(0.9909)">elias.bylund@milleteknik.se</span>
<span class="t" style="left:475.94px;top:8.00px;color:#999999;font-size:12px;transform:scaleX(1.0228)">(Connected</span>
<span class="t" style="left:542.22px;top:8.00px;color:#999999;font-size:12px;transform:scaleX(0.9869)">to</span>
<span class="t" style="left:555.59px;top:8.00px;color:#999999;font-size:12px;transform:scaleX(0.9239)">server)</span>
<span class="t" style="left:801.98px;top:43.00px;color:#000;font-size:12px;transform:scaleX(1.0147)">Connect to Com port:</span>
<span class="t" style="left:932.90px;top:41.00px;color:#000;font-size:12px;transform:scaleX(0.9781)">COM3</span>
<span class="t" style="left:23.33px;top:74.60px;color:#303030;font-size:12px;transform:scaleX(0.9834)">Dashboard</span>
<span class="t" style="left:99.17px;top:74.60px;color:#555555;font-size:12px;transform:scaleX(0.9653)">Statistics</span>
<span class="t" style="left:162.61px;top:74.60px;color:#555555;font-size:12px;transform:scaleX(1.0097)">Firmware/Config</span>
<span class="t" style="left:268.52px;top:74.60px;color:#555555;font-size:12px;transform:scaleX(1.0190)">Other</span>
<span class="t" style="left:16.83px;top:108.90px;color:#000;font-size:12px;transform:scaleX(0.9859)">Pro3</span>
<span class="t" style="left:47.83px;top:108.90px;color:#000;font-size:12px;transform:scaleX(0.9814)">Firmware:</span>
<span class="t" style="left:102.84px;top:108.90px;color:#000;font-size:12px;transform:scaleX(0.9434)">1.5</span>
<span class="t" style="left:121.78px;top:108.90px;color:#000;font-size:12px;transform:scaleX(0.8493)">CPU:</span>
<span class="t" style="left:149.80px;top:108.90px;color:#000;font-size:12px;transform:scaleX(0.9161)">PIC18F57K42</span>
<span class="t" style="left:221.98px;top:108.90px;color:#000;font-size:12px;transform:scaleX(0.9377)">Revision</span>
<span class="t" style="left:269.28px;top:108.90px;color:#000;font-size:12px;transform:scaleX(0.8990)">A3</span>
<span class="t" style="left:286.88px;top:108.90px;color:#000;font-size:12px;transform:scaleX(0.9281)">A003</span>
<span class="t" style="left:316.48px;top:108.90px;color:#000;font-size:12px;transform:scaleX(0.9483)">Serial:</span>
<span class="t" style="left:351.82px;top:108.90px;color:#000;font-size:12px;transform:scaleX(0.9614)">2103301082</span>
<span class="t" style="left:419.61px;top:108.90px;color:#000;font-size:12px;transform:scaleX(1.0076)">Manufactured:</span>
<span class="t" style="left:499.70px;top:108.90px;color:#000;font-size:12px;transform:scaleX(1.0024)">2021-04-28</span>
<span class="t" style="left:564.03px;top:108.90px;color:#000;font-size:12px;transform:scaleX(0.9884)">Rated current:</span>
<span class="t" style="left:642.29px;top:108.90px;color:#000;font-size:12px;transform:scaleX(0.8537)">5A</span>
<span class="t" style="left:659.14px;top:108.90px;color:#000;font-size:12px;transform:scaleX(0.9799)">Battery Capacity:</span>
<span class="t" style="left:751.94px;top:108.90px;color:#000;font-size:12px;transform:scaleX(0.9456)">14Ah</span>
<span class="t" style="left:781.61px;top:108.90px;color:#000;font-size:12px;transform:scaleX(1.0094)">Protocol:</span>
<span class="t" style="left:832.15px;top:108.90px;color:#000;font-size:12px;transform:scaleX(1.0001)">Vanderbilt</span>
<span class="t" style="left:889.79px;top:108.90px;color:#000;font-size:12px;transform:scaleX(0.8962)">OSDP</span>
<span class="t" style="left:923.28px;top:108.90px;color:#000;font-size:12px;transform:scaleX(0.9616)">(Enabled)</span>
<span class="t" style="left:69.06px;top:333.60px;color:#6a6a6a;font-size:12px;transform:scaleX(0.9510)">PSU Voltage</span>
<span class="t" style="left:245.92px;top:333.60px;color:#6a6a6a;font-size:12px;transform:scaleX(0.9946)">Battery Voltage</span>
<span class="t" style="left:805.34px;top:332.80px;color:#000;font-size:12px;transform:scaleX(0.9736)">Temperature</span>
<span class="t" style="left:74.46px;top:374.00px;color:#000;font-size:12px;transform:scaleX(0.9572)">OK!</span>
<span class="t" style="left:16.77px;top:425.90px;color:#000;font-size:12px;transform:scaleX(0.9433)">Relay 1</span>
<span class="t" style="left:106.65px;top:425.90px;color:#808080;font-size:12px;transform:scaleX(0.9687)">Delayed AC-Fail</span>
<span class="t" style="left:16.77px;top:458.90px;color:#000;font-size:12px;transform:scaleX(0.9437)">Relay 2</span>
<span class="t" style="left:106.90px;top:458.90px;color:#808080;font-size:12px;transform:scaleX(0.9093)">PSU</span>
<span class="t" style="left:131.56px;top:458.90px;color:#808080;font-size:12px;transform:scaleX(1.0190)">Undervolt</span>
<span class="t" style="left:187.16px;top:458.90px;color:#808080;font-size:12px;transform:scaleX(0.8957)">TestFail,</span>
<span class="t" style="left:231.18px;top:458.90px;color:#808080;font-size:12px;transform:scaleX(0.9360)">Lo</span>
<span class="t" style="left:247.36px;top:458.90px;color:#808080;font-size:12px;transform:scaleX(1.0138)">volt</span>
<span class="t" style="left:269.67px;top:458.90px;color:#808080;font-size:12px;transform:scaleX(1.0505)">during</span>
<span class="t" style="left:308.58px;top:458.90px;color:#808080;font-size:12px;transform:scaleX(0.8094)">AC,</span>
<span class="t" style="left:329.80px;top:458.90px;color:#808080;font-size:12px;transform:scaleX(0.7117)">PS</span>
<span class="t" style="left:16.77px;top:491.90px;color:#000;font-size:12px;transform:scaleX(0.9419)">Relay 3</span>
<span class="t" style="left:106.62px;top:491.90px;color:#808080;font-size:12px;transform:scaleX(0.9958)">Lo system volt</span>
<span class="t" style="left:16.78px;top:524.90px;color:#000;font-size:12px;transform:scaleX(0.9377)">Relay 4</span>
<span class="t" style="left:107.35px;top:524.90px;color:#808080;font-size:12px;transform:scaleX(0.9370)">Tamper</span>
<span class="t" style="left:16.73px;top:577.60px;color:#000;font-size:12px;transform:scaleX(0.9889)">Battery Connection Status:</span>
<span class="t" style="left:168.99px;top:577.60px;color:#000;font-size:12px;transform:scaleX(0.9981)">Connected (normal)</span>
<span class="t" style="left:16.75px;top:625.70px;color:#000;font-size:12px;transform:scaleX(0.9698)">PSU PWM Regulation:</span>
<span class="t" style="left:169.58px;top:625.70px;color:#000;font-size:12px;transform:scaleX(0.9705)">Active 47,7% (fine)</span>
<span class="t" style="left:1.18px;top:688.50px;color:#000;font-size:12px;transform:scaleX(1.0317)">on-line (Mille2)</span>
<span class="t" style="left:601.74px;top:469.00px;color:#000;font-size:12px;transform:scaleX(0.9768)">PSU Undervoltage</span>
<span class="t" style="left:601.74px;top:502.00px;color:#000;font-size:12px;transform:scaleX(0.9705)">PSU Overvoltage</span>
<span class="t" style="left:601.74px;top:535.00px;color:#000;font-size:12px;transform:scaleX(0.9715)">Low System Voltage</span>
<span class="t" style="left:601.71px;top:568.00px;color:#000;font-size:12px;transform:scaleX(1.0009)">Low Voltage in Batterymode</span>
<span class="t" style="left:602.11px;top:601.00px;color:#000;font-size:12px;transform:scaleX(0.9677)">Charger Error</span>
<span class="t" style="left:602.44px;top:634.00px;color:#000;font-size:12px;transform:scaleX(0.9754)">Testload Missing</span>
<span class="t" style="left:831.68px;top:370.00px;color:#000;font-size:12px;transform:scaleX(0.9801)">Aged Batteries</span>
<span class="t" style="left:830.75px;top:403.00px;color:#000;font-size:12px;transform:scaleX(0.9637)">Battery Resting Phase</span>
<span class="t" style="left:830.72px;top:436.00px;color:#000;font-size:12px;transform:scaleX(0.9941)">Battery Time Warning</span>
<span class="t" style="left:831.14px;top:469.00px;color:#000;font-size:12px;transform:scaleX(0.9928)">Operating Time on Batteries</span>
<span class="t" style="left:830.71px;top:502.00px;color:#000;font-size:12px;transform:scaleX(1.0060)">Battery not fully Charged</span>
<span class="t" style="left:830.75px;top:535.00px;color:#000;font-size:12px;transform:scaleX(0.9679)">Faulty Fan (3600rpm)</span>
<span class="t" style="left:831.16px;top:568.00px;color:#000;font-size:12px;transform:scaleX(0.9899)">Sensor error, temperature</span>
<span class="t" style="left:830.72px;top:601.00px;color:#000;font-size:12px;transform:scaleX(0.9927)">High Temperature</span>
<span class="t" style="left:830.74px;top:634.00px;color:#000;font-size:12px;transform:scaleX(0.9792)">Low Temperature</span>
<span class="t" style="left:697.19px;top:370.00px;color:#000;font-size:12px;transform:scaleX(0.9493)">(AC)</span>
</div>
<div id="dlg"></div>
<div class="abs" style="left:341px;top:231px;width:356px;height:246px;background:#fff"></div>
<div class="abs" style="left:341px;top:261px;width:355px;height:215px;background:#f0f0f0"></div>
<div class="abs" style="left:349px;top:269px;width:339px;height:137px;box-sizing:border-box;border:1px solid #7a7a7a;background:#fff"></div>
<div class="abs" style="left:349px;top:414px;width:339px;height:20px;background:#1babf6"></div>
<div class="abs" style="left:608px;top:442px;width:80px;height:22px;box-sizing:border-box;border:1px solid #adadad;background:#e1e1e1"></div>
<span class="t" style="left:349.03px;top:237.60px;color:#000;font-size:12px;transform:scaleX(0.9847)">Firmware upgrade status</span>
<span class="t" style="left:351.36px;top:271.70px;color:#000;font-size:12px;transform:scaleX(0.9875)">Starting Bootloader...</span>
<span class="t" style="left:350.92px;top:287.70px;color:#000;font-size:12px;transform:scaleX(1.0006)">Bootloader is running...</span>
<span class="t" style="left:350.92px;top:303.70px;color:#000;font-size:12px;transform:scaleX(0.9944)">Programming...</span>
<span class="t" style="left:350.92px;top:319.70px;color:#000;font-size:12px;transform:scaleX(0.9958)">Exit bootloader...</span>
<span class="t" style="left:350.96px;top:335.70px;color:#000;font-size:12px;transform:scaleX(0.9599)">Restarting...</span>
<span class="t" style="left:350.91px;top:351.70px;color:#000;font-size:12px;transform:scaleX(1.0025)">Firmware update complete</span>
<span class="t" style="left:350.93px;top:367.70px;color:#000;font-size:12px;transform:scaleX(0.9882)">New firmware version: 1.5</span>
<span class="t" style="left:498.44px;top:416.30px;color:#000;font-size:12px;transform:scaleX(0.9401)">100,0%</span>
<span class="t" style="left:640.06px;top:445.50px;color:#000;font-size:12px;transform:scaleX(0.9438)">OK</span>
</body></html>
